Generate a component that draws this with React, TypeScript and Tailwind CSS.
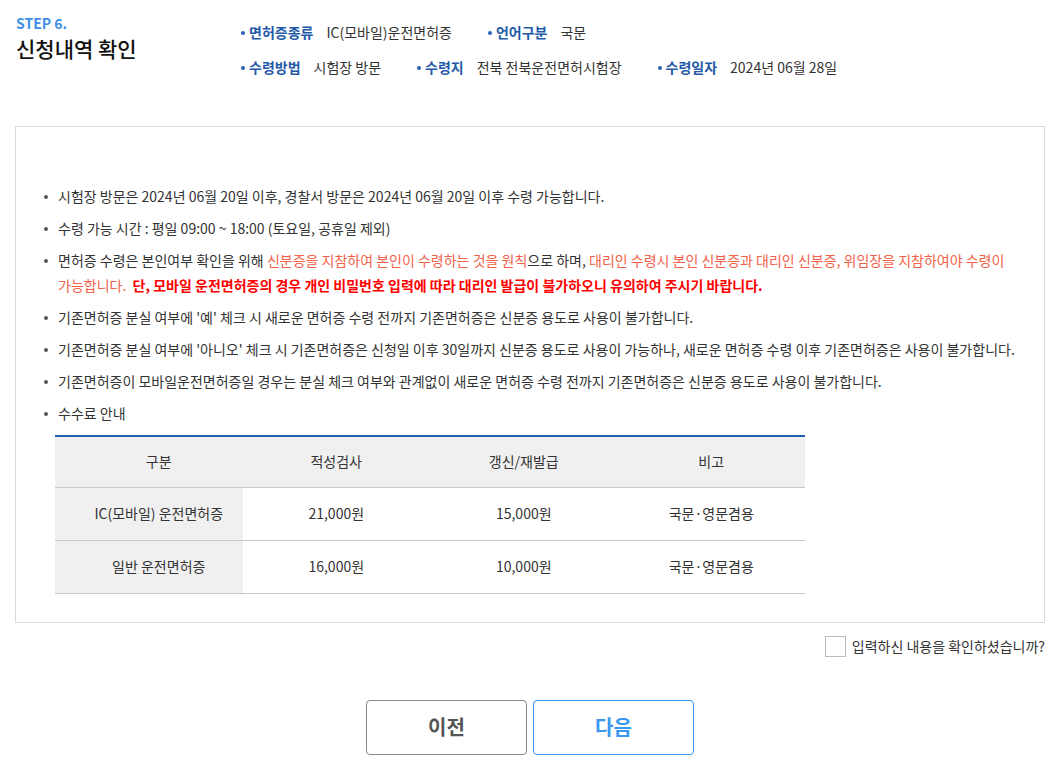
import React from 'react';

const font = { fontFamily: '"Noto Sans CJK KR", "Noto Sans", sans-serif' };

const infoRows = [
  [
    { label: '면허증종류', value: 'IC(모바일)운전면허증' },
    { label: '언어구분', value: '국문' },
  ],
  [
    { label: '수령방법', value: '시험장 방문' },
    { label: '수령지', value: '전북 전북운전면허시험장' },
    { label: '수령일자', value: '2024년 06월 28일' },
  ],
];

const fees = [
  { name: 'IC(모바일) 운전면허증', test: '21,000원', renew: '15,000원', note: '국문·영문겸용' },
  { name: '일반 운전면허증', test: '16,000원', renew: '10,000원', note: '국문·영문겸용' },
];

const Item: React.FC<{ children: React.ReactNode }> = ({ children }) => (
  <li className="relative pl-[15px] mb-[7px] leading-[25px] break-keep">
    <span className="absolute left-[1px] top-[11px] w-[4px] h-[4px] rounded-full bg-[#555]" />
    {children}
  </li>
);

const App: React.FC = () => {
  const [checked, setChecked] = React.useState(false);

  return (
    <div className="w-[1060px] min-h-[778px] bg-white text-[#333] px-[15px]" style={font}>
      {/* Header */}
      <div className="flex pt-[14px] h-[126px]">
        <div className="w-[226px] pl-[1px]">
          <div className="text-[14px] font-bold text-[#3d8fe6] leading-[18px]">STEP 6.</div>
          <h2 className="text-[21px] font-medium text-[#111] leading-[30px] mt-[1px]">신청내역 확인</h2>
        </div>
        <div className="pt-[1px]">
          {infoRows.map((row, i) => (
            <div key={i} className="flex gap-[36px] h-[35px] items-center text-[14px]">
              {row.map((it) => (
                <div key={it.label} className="flex items-center">
                  <span className="w-[4px] h-[4px] rounded-full bg-[#2a62b8] mr-[4px]" />
                  <span className="font-bold text-[#1f5aa8]">{it.label}</span>
                  <span className="ml-[13px] text-[#333]">{it.value}</span>
                </div>
              ))}
            </div>
          ))}
        </div>
      </div>

      {/* Content box */}
      <div className="border border-[#d9d9d9] pt-[57px] pb-[28px] pl-[27px] pr-[10px] text-[14px]">
        <ul>
          <Item>시험장 방문은 2024년 06월 20일 이후, 경찰서 방문은 2024년 06월 20일 이후 수령 가능합니다.</Item>
          <Item>수령 가능 시간 : 평일 09:00 ~ 18:00 (토요일, 공휴일 제외)</Item>
          <Item>
            면허증 수령은 본인여부 확인을 위해 <span className="text-[#f2624a]">신분증을 지참하여 본인이 수령하는 것을 원칙</span>으로 하며,{' '}
            <span className="text-[#f2624a]">대리인 수령시 본인 신분증과 대리인 신분증, 위임장을 지참하여야 수령이 가능합니다.</span>
            &nbsp;&nbsp;<span className="font-bold text-[#ff0000]">단, 모바일 운전면허증의 경우 개인 비밀번호 입력에 따라 대리인 발급이 불가하오니 유의하여 주시기 바랍니다.</span>
          </Item>
          <Item>기존면허증 분실 여부에 '예' 체크 시 새로운 면허증 수령 전까지 기존면허증은 신분증 용도로 사용이 불가합니다.</Item>
          <Item>기존면허증 분실 여부에 '아니오' 체크 시 기존면허증은 신청일 이후 30일까지 신분증 용도로 사용이 가능하나, 새로운 면허증 수령 이후 기존면허증은 사용이 불가합니다.</Item>
          <Item>기존면허증이 모바일운전면허증일 경우는 분실 체크 여부와 관계없이 새로운 면허증 수령 전까지 기존면허증은 신분증 용도로 사용이 불가합니다.</Item>
          <Item>수수료 안내</Item>
        </ul>

        <table className="w-[750px] ml-[12px] mt-[9px] border-t-2 border-[#1f5fb0] text-[14px] text-center table-fixed">
          <thead>
            <tr className="bg-[#f0f0f0] h-[51px] border-b border-[#c8c8c8]">
              <th className="font-normal pl-[20px]">구분</th>
              <th className="font-normal">적성검사</th>
              <th className="font-normal">갱신/재발급</th>
              <th className="font-normal">비고</th>
            </tr>
          </thead>
          <tbody>
            {fees.map((f) => (
              <tr key={f.name} className="h-[53px] border-b border-[#c8c8c8]">
                <td className="bg-[#f0f0f0] pl-[20px]">{f.name}</td>
                <td>{f.test}</td>
                <td>{f.renew}</td>
                <td>{f.note}</td>
              </tr>
            ))}
          </tbody>
        </table>
      </div>

      {/* Confirm */}
      <label className="flex justify-end items-center mt-[13px] text-[14px] cursor-pointer">
        <input
          type="checkbox"
          checked={checked}
          onChange={(e) => setChecked(e.target.checked)}
          className="appearance-none w-[21px] h-[21px] border border-[#bbb] bg-white mr-[6px] checked:bg-[#3d8fe6]"
        />
        <span>입력하신 내용을 확인하셨습니까?</span>
      </label>

      {/* Buttons */}
      <div className="flex justify-center gap-[6px] mt-[43px]">
        <button className="w-[161px] h-[55px] border border-[#888] rounded-[4px] text-[20px] font-bold text-[#555] bg-white">이전</button>
        <button className="w-[161px] h-[55px] border border-[#3a97f0] rounded-[4px] text-[20px] font-bold text-[#3a97f0] bg-white">다음</button>
      </div>
    </div>
  );
};

export default App;
